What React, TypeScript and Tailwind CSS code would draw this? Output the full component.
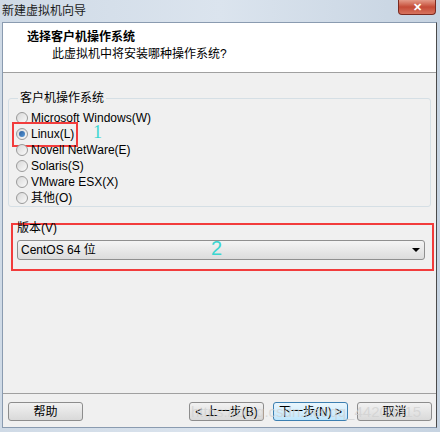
import * as React from 'react';

const osOptions = [
    { label: 'Microsoft Windows(W)', checked: false },
    { label: 'Linux(L)', checked: true },
    { label: 'Novell NetWare(E)', checked: false },
    { label: 'Solaris(S)', checked: false },
    { label: 'VMware ESX(X)', checked: false },
    { label: '其他(O)', checked: false },
];

const Radio: React.FC<{ checked: boolean }> = ({ checked }) => (
    <span className="w-[12px] h-[12px] rounded-full border border-[#9a9a9a] bg-gradient-to-br from-[#d8d8d8] to-[#fafafa] flex items-center justify-center shrink-0">
        {checked && <span className="w-[6px] h-[6px] rounded-full bg-gradient-to-br from-[#2a5d9c] to-[#5a9ad8]"></span>}
    </span>
);

const WinButton: React.FC<{ children: React.ReactNode; primary?: boolean; className?: string }> = ({ children, primary, className }) => (
    <div
        className={`h-[19px] w-[75px] rounded-[3px] border flex items-center justify-center text-[12px] text-black ${
            primary
                ? 'border-[#3c7fb1] bg-gradient-to-b from-[#eaf6fd] to-[#bee6fd]'
                : 'border-[#8d8d8d] bg-gradient-to-b from-[#f2f2f2] to-[#d9d9d9]'
        } ${className ?? ''}`}
    >
        {children}
    </div>
);

export default function App() {
    return (
        <div className="w-[440px] h-[432px] overflow-hidden relative bg-gradient-to-r from-[#cfdae6] via-[#dbe4ee] to-[#c6d3e1] font-['Liberation_Sans','Noto_Sans_CJK_SC',sans-serif]">
            {/* title bar */}
            <div className="h-[22px] flex items-center pl-[2px] relative">
                <span className="text-[12px] text-[#1a1a1a]">新建虚拟机向导</span>
                <div className="absolute right-[4px] top-0 w-[38px] h-[15px] rounded-b-[4px] border border-t-0 border-[#7a2a20] bg-gradient-to-b from-[#e39a88] via-[#c44a36] to-[#d7735e] flex items-center justify-center">
                    <span className="text-white text-[11px] font-bold leading-none">✕</span>
                </div>
            </div>

            {/* window body */}
            <div className="ml-[2px] mr-[3px] h-[406px] border border-[#8a9bb0] border-r-[#4a4a4a] bg-[#f0f0f0] flex flex-col">
                <div className="h-[50px] bg-white border-b border-[#a0a0a0] pt-[7px] pl-[24px]">
                    <div className="text-[12px] font-bold text-black leading-[15px]">选择客户机操作系统</div>
                    <div className="text-[12px] text-black leading-[15px] mt-[2px] pl-[25px]">此虚拟机中将安装哪种操作系统?</div>
                </div>

                <div className="px-[5px] pt-[16px]">
                    <fieldset className="border border-[#d5dfe5] rounded-[3px] h-[118px] w-[423px] pl-[7px]">
                        <legend className="text-[12px] text-black px-[2px] ml-[2px]">客户机操作系统</legend>
                        <div className="flex flex-col pt-[3px]">
                            {osOptions.map((o, i) => (
                                <div key={o.label} className="h-[16px] flex items-center gap-[3px] relative">
                                    <Radio checked={o.checked} />
                                    <span className="text-[12px] text-black">{o.label}</span>
                                    {i === 1 && (
                                        <>
                                            <div className="absolute left-[-4px] top-[-4px] w-[66px] h-[25px] border-2 border-[#f23c3c]"></div>
                                            <span className="absolute left-[77px] top-[-3px] text-[18px] text-[#3ad6d0] font-['Liberation_Serif',serif] leading-none">1</span>
                                        </>
                                    )}
                                </div>
                            ))}
                        </div>
                    </fieldset>

                    <div className="mt-[16px] ml-[3px] w-[423px] h-[48px] border-2 border-[#f23c3c] relative pl-[4px]">
                        <div className="text-[12px] text-black leading-[12px] mt-[-3px]">版本(V)</div>
                        <div className="mt-[6px] w-[408px] h-[20px] rounded-[3px] border border-[#8f8f8f] bg-gradient-to-b from-[#f4f4f4] to-[#dcdcdc] flex items-center pl-[3px] pr-[4px]">
                            <span className="text-[12px] text-black">CentOS 64 位</span>
                            <span className="ml-auto w-0 h-0 border-l-[4px] border-r-[4px] border-t-[4px] border-l-transparent border-r-transparent border-t-black"></span>
                        </div>
                        <span className="absolute left-[198px] top-[13px] text-[20px] text-[#3ad6d0] leading-none">2</span>
                    </div>
                </div>

                <div className="mt-auto border-t border-[#a0a0a0] h-[34px] flex items-start pt-[8px] pl-[5px] relative">
                    <WinButton>帮助</WinButton>
                    <WinButton className="ml-[106px]">&lt; 上一步(B)</WinButton>
                    <WinButton primary className="ml-[9px]">下一步(N) &gt;</WinButton>
                    <WinButton className="ml-[9px]">取消</WinButton>
                    <span className="absolute left-[188px] top-[7px] text-[15px] text-[#cfcfcf]/70 whitespace-nowrap pointer-events-none">https://blog.csdn.net/qq_44209915</span>
                </div>
            </div>
        </div>
    );
}
